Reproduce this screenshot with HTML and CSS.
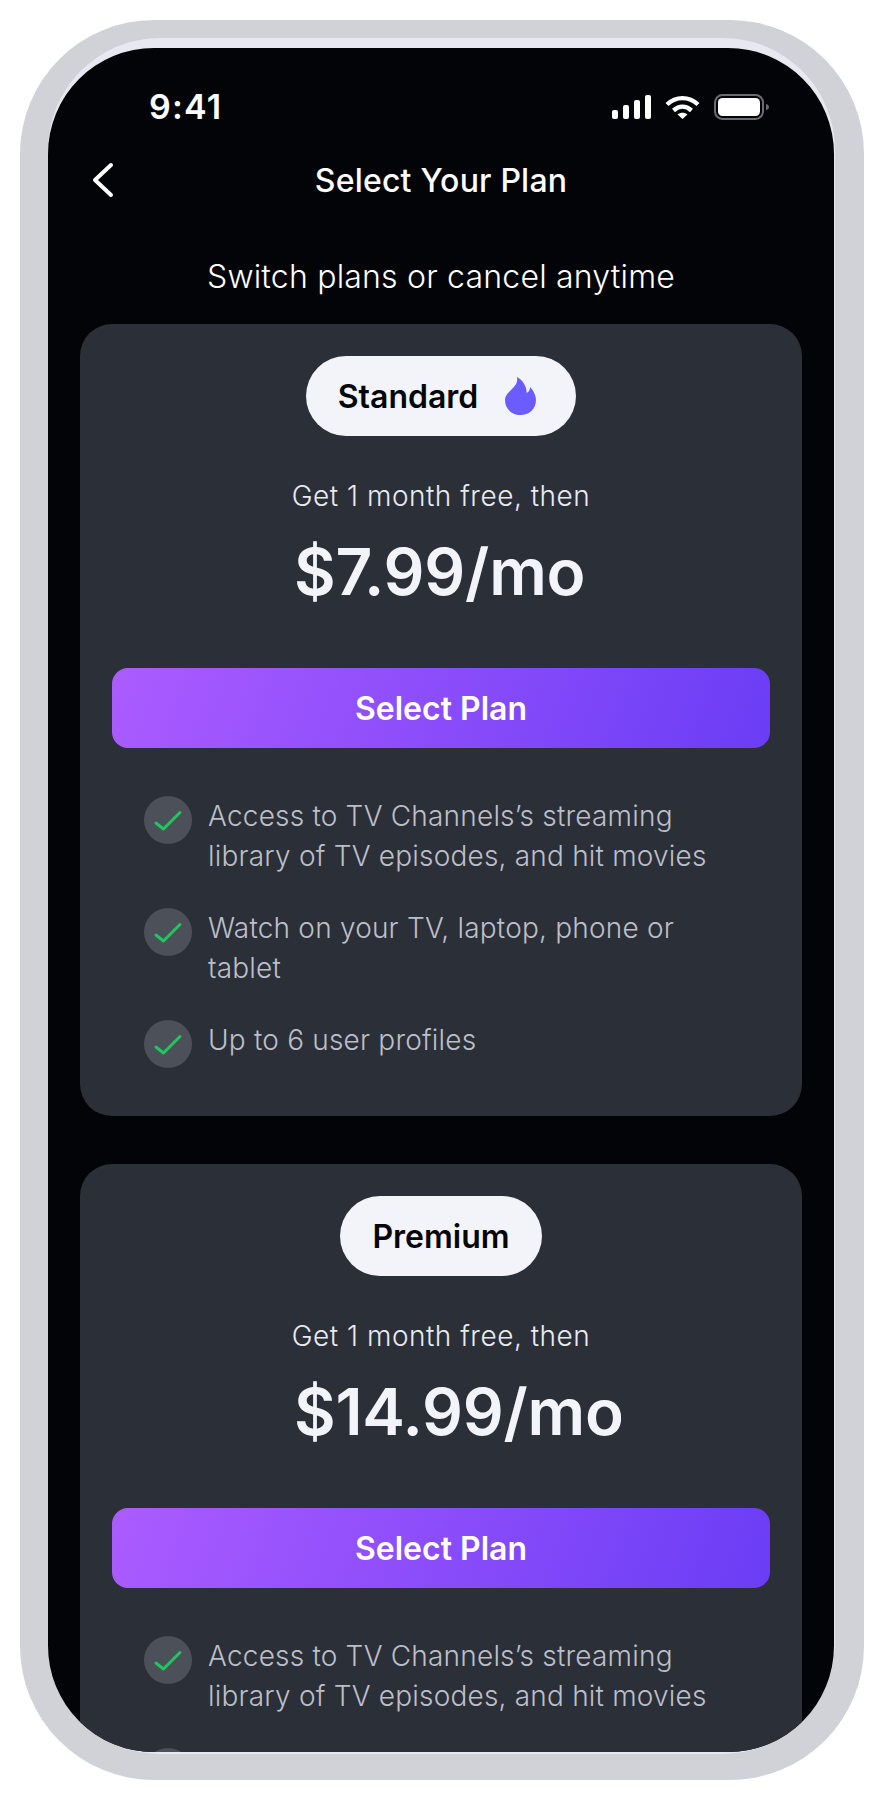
FILE: index.html
```html
<!DOCTYPE html>
<html lang="en">
<head>
<meta charset="utf-8">
<title>Select Your Plan</title>
<link rel="stylesheet" href="styles.css">
</head>
<body>
<div class="frame">
  <div class="bezel">
    <main class="screen">
      <div class="status">
        <span class="time">9:41</span>
        <div class="status-icons">
          <svg class="i-signal" width="39" height="24" viewBox="0 0 39 24"><rect x="0" y="15" width="6" height="9" rx="2"/><rect x="11" y="10" width="6" height="14" rx="2"/><rect x="22" y="5" width="6" height="19" rx="2"/><rect x="33" y="0" width="6" height="24" rx="2"/></svg>
          <svg class="i-wifi" width="35" height="24" viewBox="0 0 35 24"><path d="M2 9.500C11 1 24 1 33 9.500" fill="none" stroke="#fff" stroke-width="4.400"/><path d="M8.500 15.500C14 10.500 21 10.500 26.500 15.500" fill="none" stroke="#fff" stroke-width="4.400"/><path d="M12.500 19.500C15.500 17 19.500 17 22.500 19.500L17.500 24Z" fill="#fff"/></svg>
          <svg class="i-batt" width="56" height="26" viewBox="0 0 56 26"><rect x="1" y="1" width="48" height="24" rx="7.500" fill="none" stroke="#6a6c72" stroke-width="2"/><rect x="4" y="4" width="42" height="18" rx="4.500" fill="#fff"/><path d="M52 10V16C54 15.500 55 14.500 55 13S54 10.500 52 10Z" fill="#6a6c72"/></svg>
        </div>
      </div>
      <header class="nav">
        <svg class="back" width="24" height="36" viewBox="0 0 24 36"><path d="M20 3L4 18L20 33" fill="none" stroke="#fff" stroke-width="4" stroke-linecap="round" stroke-linejoin="round"/></svg>
        <h1 class="title">Select Your Plan</h1>
      </header>
      <p class="subtitle">Switch plans or cancel anytime</p>

      <section class="card">
        <div class="badge"><span>Standard</span>
          <svg class="flame" width="31" height="38" viewBox="0 0 31 38"><path d="M12 0C13 6 10 9 6 13C2 17 0 19 0 23C0 32 7 38 15.500 38C24 38 31 32 31 23C31 18 28 13 25 10C25 13 24 15 21.500 16C22 10 18 3 12 0Z" fill="#6b5cff"/></svg>
        </div>
        <p class="offer">Get 1 month free, then</p>
        <div class="price"><span class="amount">$7.99/mo</span></div>
        <button class="cta">Select Plan</button>
        <ul class="features">
          <li><svg class="check" width="48" height="48" viewBox="0 0 48 48"><circle cx="24" cy="24" r="24" fill="#4b5059"/><path d="M12 27L19.500 33L36 16.500" fill="none" stroke="#22c55e" stroke-width="3" stroke-linecap="round" stroke-linejoin="round"/></svg><span>Access to TV Channels’s streaming library of TV episodes, and hit movies</span></li>
          <li><svg class="check" width="48" height="48" viewBox="0 0 48 48"><circle cx="24" cy="24" r="24" fill="#4b5059"/><path d="M12 27L19.500 33L36 16.500" fill="none" stroke="#22c55e" stroke-width="3" stroke-linecap="round" stroke-linejoin="round"/></svg><span>Watch on your TV, laptop, phone or tablet</span></li>
          <li><svg class="check" width="48" height="48" viewBox="0 0 48 48"><circle cx="24" cy="24" r="24" fill="#4b5059"/><path d="M12 27L19.500 33L36 16.500" fill="none" stroke="#22c55e" stroke-width="3" stroke-linecap="round" stroke-linejoin="round"/></svg><span>Up to 6 user profiles</span></li>
        </ul>
      </section>

      <section class="card">
        <div class="badge"><span>Premium</span></div>
        <p class="offer">Get 1 month free, then</p>
        <div class="price"><span class="amount clipped">$14.99/mo</span></div>
        <button class="cta">Select Plan</button>
        <ul class="features">
          <li><svg class="check" width="48" height="48" viewBox="0 0 48 48"><circle cx="24" cy="24" r="24" fill="#4b5059"/><path d="M12 27L19.500 33L36 16.500" fill="none" stroke="#22c55e" stroke-width="3" stroke-linecap="round" stroke-linejoin="round"/></svg><span>Access to TV Channels’s streaming library of TV episodes, and hit movies</span></li>
          <li><svg class="check" width="48" height="48" viewBox="0 0 48 48"><circle cx="24" cy="24" r="24" fill="#4b5059"/><path d="M12 27L19.500 33L36 16.500" fill="none" stroke="#22c55e" stroke-width="3" stroke-linecap="round" stroke-linejoin="round"/></svg><span>Watch on your TV, laptop, phone or tablet</span></li>
        </ul>
      </section>
    </main>
  </div>
</div>
</body>
</html>
```
FILE: styles.css
```css
* { box-sizing: border-box; }
html, body { margin: 0; padding: 0; background: #fff; }
body { font-family: Inter, "Liberation Sans", sans-serif; }

.frame {
  width: 844px;
  height: 1760px;
  margin: 20px 21px 14px 20px;
  padding: 18px 29px 26px 28px;
  background: #d1d2d8;
  border-radius: 134px;
}
.bezel {
  height: 100%;
  padding: 10px 1px 2px 0;
  background: #e8e8f0;
  border-radius: 112px;
}
.screen {
  height: 100%;
  background: #030408;
  border-radius: 106px;
  overflow: hidden;
}

.status {
  display: flex;
  justify-content: space-between;
  align-items: center;
  height: 40px;
  margin-top: 39px;
  padding: 0 64px 0 101px;
}
.time { color: #fff; font-size: 34px; font-weight: 600; line-height: 40px; letter-spacing: 1.2px; }
.status-icons { display: flex; align-items: center; gap: 14px; }
.i-signal { fill: #fff; }

.nav {
  position: relative;
  display: flex;
  justify-content: center;
  align-items: center;
  height: 48px;
  margin-top: 30px;
}
.back { position: absolute; left: 43px; top: 5px; }
.title { margin: 0; color: #fff; font-size: 32px; font-weight: 500; line-height: 48px; letter-spacing: 0.2px; }

.subtitle {
  margin: 52px 0 0;
  color: #fff;
  font-size: 32px;
  font-weight: 300;
  line-height: 40px;
  letter-spacing: 0.2px;
  text-align: center;
}

.card {
  display: flex;
  flex-direction: column;
  align-items: center;
  margin: 27px 32px 48px;
  padding: 32px 32px 48px;
  background: #2b2f37;
  border-radius: 32px;
}
.card + .card { margin-top: 0; }

.badge {
  display: flex;
  align-items: center;
  gap: 27px;
  height: 80px;
  padding: 0 32px;
  background: #f3f4f9;
  border-radius: 40px;
  color: #05060a;
  font-size: 32px;
  font-weight: 600;
}
.flame { margin-right: 8px; }
.offer {
  margin: 40px 0 0;
  color: #e9eaf0;
  font-size: 28px;
  font-weight: 300;
  line-height: 40px;
  letter-spacing: 0.5px;
}
.price {
  width: 294px;
  margin-top: 16px;
  height: 80px;
}
.amount {
  display: block;
  width: max-content;
  color: #f3f4f9;
  font-size: 64px;
  font-weight: 600;
  line-height: 80px;
  letter-spacing: -0.2px;
  white-space: nowrap;
}
.amount.clipped { width: 327px; overflow: hidden; }

.cta {
  width: 100%;
  height: 80px;
  margin-top: 56px;
  border: 0;
  border-radius: 16px;
  background: linear-gradient(110deg, #ab5cff 0%, #6a3df5 100%);
  color: #fff;
  font-family: inherit;
  font-size: 32px;
  font-weight: 600;
}

.features {
  display: flex;
  flex-direction: column;
  gap: 32px;
  width: 100%;
  margin: 48px 0 0;
  padding: 0 32px;
  list-style: none;
}
.features li {
  display: flex;
  gap: 16px;
  color: #bcbfc9;
  font-size: 28px;
  font-weight: 300;
  line-height: 40px;
  letter-spacing: 0.2px;
}
.check { flex: none; }
```
